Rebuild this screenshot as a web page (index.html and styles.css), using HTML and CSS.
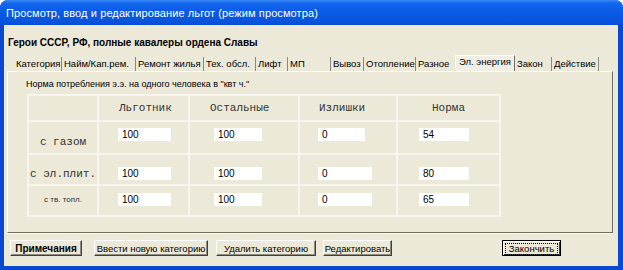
FILE: index.html
```html
<!DOCTYPE html>
<html>
  <head>
    <title>Просмотр льгот</title>
    <link rel="stylesheet" href="styles.css">
  </head>
  <body>
    <div class="window">
      <div class="titlebar">Просмотр, ввод и редактирование льгот (режим просмотра)</div>
      <div class="client">
        <div class="caption">Герои СССР, РФ, полные кавалеры ордена Славы</div>

        <div class="tabs">
          <span class="tab">Категория</span>
          <span class="tab">Найм/Кап.рем.</span>
          <span class="tab">Ремонт жилья</span>
          <span class="tab">Тех. обсл.</span>
          <span class="tab">Лифт</span>
          <span class="tab">МП</span>
          <span class="tab">Вывоз</span>
          <span class="tab">Отопление</span>
          <span class="tab tab-before">Разное</span>
          <span class="tab active">Эл. энергия</span>
          <span class="tab">Закон</span>
          <span class="tab">Действие</span>
        </div>

        <div class="panel">
          <div class="note">Норма потребления э.э. на одного человека в "квт ч."</div>
          <div class="grid">
            <div class="cell head"></div>
            <div class="cell head c2">Льготник</div>
            <div class="cell head c3">Остальные</div>
            <div class="cell head c4">Излишки</div>
            <div class="cell head c5">Норма</div>

            <div class="cell label r1">с газом</div>
            <div class="cell r1 c2"><input class="field w53" value="100" readonly></div>
            <div class="cell r1 c3"><input class="field w48" value="100" readonly></div>
            <div class="cell r1 c4"><input class="field w47" value="0" readonly></div>
            <div class="cell r1 c5"><input class="field w50" value="54" readonly></div>

            <div class="cell label r2">с эл.плит.</div>
            <div class="cell r2 c2"><input class="field w53" value="100" readonly></div>
            <div class="cell r2 c3"><input class="field w48" value="100" readonly></div>
            <div class="cell r2 c4"><input class="field w54" value="0" readonly></div>
            <div class="cell r2 c5"><input class="field w50" value="80" readonly></div>

            <div class="cell label small r3">с тв. топл.</div>
            <div class="cell r3 c2"><input class="field w53" value="100" readonly></div>
            <div class="cell r3 c3"><input class="field w48" value="100" readonly></div>
            <div class="cell r3 c4"><input class="field w54" value="0" readonly></div>
            <div class="cell r3 c5"><input class="field w50" value="65" readonly></div>
          </div>
        </div>

        <div class="buttons">
          <button class="btn notes">Примечания</button>
          <button class="btn add">Ввести новую категорию</button>
          <button class="btn del">Удалить категорию</button>
          <button class="btn edit">Редактировать</button>
          <button class="btn default"><span class="focus">Закончить</span></button>
        </div>
      </div>
    </div>
  </body>
</html>
```

FILE: styles.css
```css
body {
  margin: 0;
  padding: 0;
  background-color: #ffffff;
  font-family: "Liberation Sans", Arial, sans-serif;
  font-size: 10px;
  color: #000;
}

.window {
  width: 623px;
  height: 270px;
  background: #0a48d2;
  border-radius: 8px 8px 0 0;
  display: flex;
  flex-direction: column;
  overflow: hidden;
}

.titlebar {
  height: 25px;
  line-height: 26px;
  padding-left: 6px;
  color: #fff;
  font-size: 11px;
  letter-spacing: 0.1px;
  background: linear-gradient(#3b8cf7 0, #1466ee 3px, #0a5ae6 12px, #0853dc 22px, #0a4bd4 25px);
}

.client {
  flex: 1;
  margin: 0 5px 4px 4px;
  background: #ece9d8;
  display: flex;
  flex-direction: column;
}

.caption {
  padding: 11px 0 0 4px;
  line-height: 13px;
  font-weight: bold;
}

/* tab strip */
.tabs {
  display: flex;
  align-items: flex-end;
  height: 16px;
  margin-top: 6px;
  padding-left: 10px;
  font-size: 9.5px;
}

.tab {
  box-sizing: border-box;
  height: 14px;
  line-height: 14px;
  padding-left: 2px;
  border-right: 1px solid #8a887c;
  white-space: nowrap;
  overflow: hidden;
}

.tab:nth-child(1) { width: 48px; }
.tab:nth-child(2) { width: 74px; }
.tab:nth-child(3) { width: 68px; }
.tab:nth-child(4) { width: 52px; }
.tab:nth-child(5) { width: 32px; }
.tab:nth-child(6) { width: 43px; }
.tab:nth-child(7) { width: 33px; }
.tab:nth-child(8) { width: 52px; }
.tab:nth-child(9) { width: 39px; }
.tab:nth-child(10) { width: 60px; }
.tab:nth-child(11) { width: 37px; }
.tab:nth-child(12) { width: 47px; }

.tab-before {
  border-right: none;
}

.tab.active {
  height: 16px;
  line-height: 12px;
  padding-left: 3px;
  background: #f1efe5;
  border-left: 1px solid #fff;
  border-top: 1px solid #fff;
  border-right: 1px solid #716f64;
}

/* page of the selected tab */
.panel {
  height: 160px;
  margin: 0 5px 0 3px;
  border-top: 1px solid #fff;
  border-left: 1px solid #fff;
  border-right: 1px solid #6f6d62;
  border-bottom: 1px solid #6f6d62;
  box-shadow: 0 1px 0 #fbfaf5;
}

.note {
  padding: 6px 0 0 18px;
  font-size: 9px;
  line-height: 13px;
}

.grid {
  display: grid;
  grid-template-columns: 70px 91px 110px 98px 103px;
  grid-template-rows: 26px 33px 31px 31px;
  width: 472px;
  margin: 3px 0 0 19px;
  border-top: 2px solid #f7f5ee;
  border-left: 2px solid #f7f5ee;
}

.cell {
  box-sizing: border-box;
  border-right: 2px solid #f7f5ee;
  border-bottom: 2px solid #f7f5ee;
}

.head {
  font-family: "Liberation Mono", "Courier New", monospace;
  font-size: 11px;
  line-height: 24px;
  color: #333;
}

.head.c2, .head.c3 { padding-left: 20px; }
.head.c4 { padding-left: 19px; }
.head.c5 { text-align: center; }

.label {
  font-family: "Liberation Mono", "Courier New", monospace;
  font-size: 11px;
  text-align: center;
  line-height: 13px;
  color: #333;
}

.label.small {
  font-family: "Liberation Sans", Arial, sans-serif;
  font-size: 8px;
}

.r1 { padding-top: 6px; }
.r2 { padding-top: 12px; }
.r3 { padding-top: 7px; }
.label.r1 { padding-top: 14px; }
.label.r2 { padding-top: 13px; }
.label.r3 { padding-top: 7px; }

.c2 .field { margin-left: 19px; }
.c3 .field { margin-left: 24px; }
.c4 .field { margin-left: 18px; }
.c5 .field { margin-left: 21px; }

.field {
  display: block;
  box-sizing: border-box;
  height: 13px;
  padding: 0 0 0 4px;
  border: none;
  outline: none;
  background: #fff;
  font-family: "Liberation Sans", Arial, sans-serif;
  font-size: 10px;
  line-height: 13px;
  color: #000;
}

.w47 { width: 47px; }
.w48 { width: 48px; }
.w50 { width: 50px; }
.w53 { width: 53px; }
.w54 { width: 54px; }

/* bottom buttons */
.buttons {
  display: flex;
  align-items: center;
  margin-top: 7px;
  padding-left: 6px;
}

.btn {
  box-sizing: border-box;
  height: 16px;
  padding: 0;
  background: #ece9d8;
  font-family: "Liberation Sans", Arial, sans-serif;
  font-size: 9.5px;
  color: #000;
  white-space: nowrap;
  border: 1px solid;
  border-color: #fff #404040 #404040 #fff;
  box-shadow: inset -1px -1px 0 #8d8b80;
  line-height: 13px;
}

.btn.notes {
  width: 72px;
  font-size: 10px;
  font-weight: bold;
}

.btn.add {
  width: 114px;
  margin-left: 12px;
}

.btn.del {
  width: 100px;
  margin-left: 8px;
}

.btn.edit {
  width: 69px;
  margin-left: 7px;
}

.btn.default {
  width: 59px;
  margin-left: 110px;
  border: 1px solid #000;
  box-shadow: inset 1px 1px 0 #fff, inset -1px -1px 0 #404040;
}

.focus {
  display: inline-block;
  padding: 0 3px;
  line-height: 10px;
  outline: 1px dotted #000;
}
```
